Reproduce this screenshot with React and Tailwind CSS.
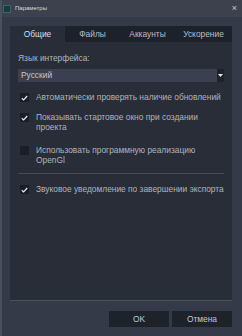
import React from "react";

const Check = ({ checked }) => (
  <span className="w-[9px] h-[9px] shrink-0 bg-[#1b1e26] flex items-center justify-center mt-[1px]">
    {checked && (
      <svg width="7" height="6" viewBox="0 0 7 6">
        <path d="M0.8 3.2 L2.6 4.9 L6.2 1" fill="none" stroke="#e8eaee" strokeWidth="1.2" />
      </svg>
    )}
  </span>
);

const Option = ({ checked, children, className = "" }) => (
  <div className={`flex items-start gap-[7px] ${className}`}>
    <Check checked={checked} />
    <span className="leading-[10px] text-[#b0b4bd]">{children}</span>
  </div>
);

const tabs = ["Общие", "Файлы", "Аккаунты", "Ускорение"];

export default function App() {
  return (
    <div
      className="w-[242px] h-[336px] flex flex-col bg-[#343a47] border-l-2 border-[#4a505d] text-[8.4px]"
      style={{ fontFamily: '"Liberation Sans", Arial, sans-serif' }}
    >
      {/* title bar */}
      <div className="h-[17px] bg-[#3c414d] flex items-center pl-[1px] pr-[5px]">
        <span className="w-[8px] h-[8px] bg-[#1c3a3d] border border-[#2f6b6a] mr-[4px]" />
        <span className="text-[6px] text-[#d6d9de] flex-1">Параметры</span>
        <span className="text-[9px] text-[#c9ccd2] leading-none">×</span>
      </div>

      <div className="flex-1 flex flex-col pl-[8px] pr-[10px] pt-[9px] pb-[9px]">
        {/* tabs */}
        <div className="flex h-[16px]">
          {tabs.map((t, i) => (
            <div
              key={t}
              className={`flex items-center justify-center ${
                i === 0 ? "bg-[#282d38] text-[#dcdfe4]" : "bg-[#1d212a] text-[#b9bdc5]"
              } ${i === 3 ? "w-[57px]" : "w-[55px]"}`}
            >
              {t}
            </div>
          ))}
        </div>

        {/* panel */}
        <div className="h-[259px] bg-[#282d38] border-b border-[#4a505c] flex flex-col px-[8px] pt-[11px]">
          <div className="text-[#b0b4bd] leading-[10px]">Язык интерфейса:</div>
          <div className="mt-[6px] h-[13px] bg-[#3b4050] flex items-center">
            <span className="flex-1 pl-[3px] text-[#c3c7ce]">Русский</span>
            <span className="w-[7px] h-full bg-[#1f232c] flex items-center justify-center">
              <svg width="5" height="3" viewBox="0 0 5 3">
                <path d="M0 0 H5 L2.5 3 Z" fill="#e6e8ec" />
              </svg>
            </span>
          </div>

          <div className="flex flex-col pl-[2px]">
            <Option checked className="mt-[10px]">
              Автоматически проверять наличие обновлений
            </Option>
            <Option checked className="mt-[10px]">
              Показывать стартовое окно при создании
              <br />
              проекта
            </Option>
            <Option checked={false} className="mt-[13px]">
              Использовать программную реализацию
              <br />
              OpenGl
            </Option>
          </div>
          <div className="mt-[8px] h-px bg-[#444a57]" />
          <div className="pl-[2px]">
            <Option checked className="mt-[10px]">
              Звуковое уведомление по завершении экспорта
            </Option>
          </div>
        </div>

        {/* buttons */}
        <div className="mt-[10px] flex justify-end gap-[3px]">
          <button className="w-[60px] h-[16px] bg-[#1e222b] text-[#c3c7ce]">OK</button>
          <button className="w-[60px] h-[16px] bg-[#1e222b] text-[#c3c7ce]">Отмена</button>
        </div>
      </div>
    </div>
  );
}
